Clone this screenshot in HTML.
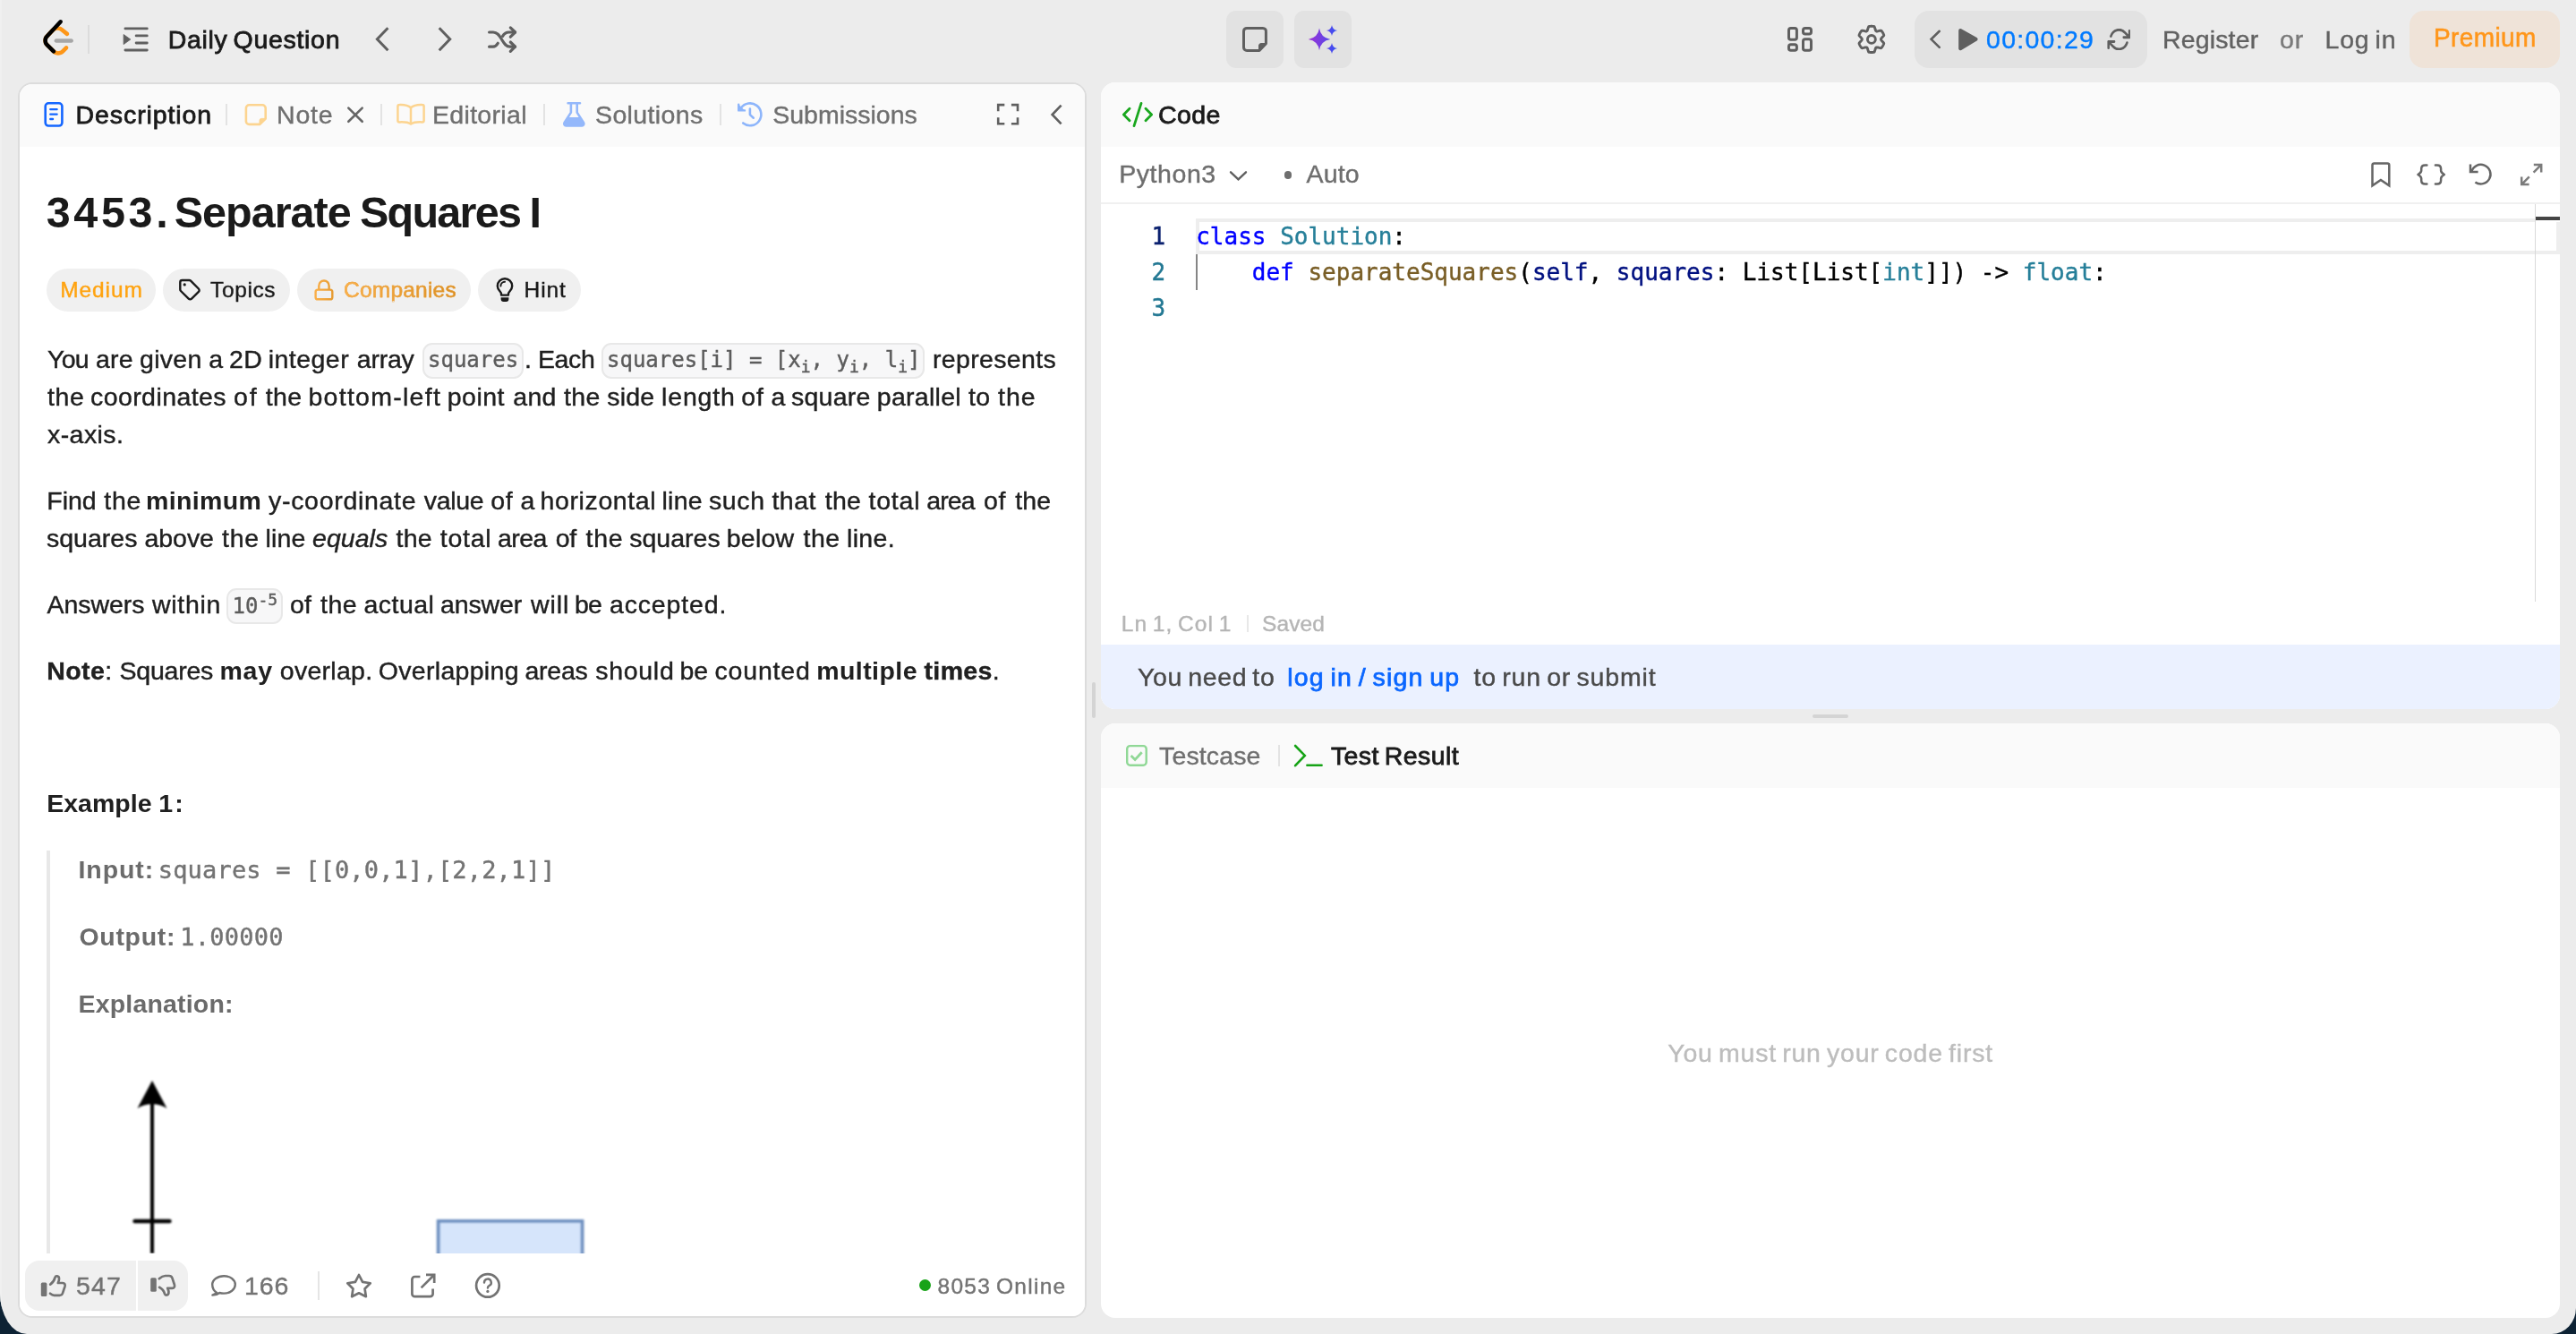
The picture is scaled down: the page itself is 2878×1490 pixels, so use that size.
<!DOCTYPE html>
<html lang="en"><head><meta charset="utf-8"><title>Separate Squares I - LeetCode</title>
<style>

html,body{margin:0;padding:0;}
body{width:2878px;height:1490px;overflow:hidden;background:#0d2234;}
#root{position:absolute;left:0;top:0;width:2878px;height:1490px;overflow:hidden;background:#ececec;border-radius:0 0 27px 30px / 0 0 29px 46px;font-family:"Liberation Sans",sans-serif;}
#root div,#root svg{position:absolute;}
#lstrip{left:0;top:0;width:2px;height:1490px;background:#f0f0f0;}
#txt{left:0;top:0;width:2878px;height:1490px;will-change:transform;}
.t{position:absolute;white-space:pre;line-height:1;word-spacing:-0.09em;}
.m{word-spacing:0;font-family:"DejaVu Sans Mono","Liberation Mono",monospace;}
.t sub,.t sup{font-size:18px;line-height:0;position:relative;vertical-align:baseline;}
.t sub{top:6px;}
.t sup{top:-9px;}
.panel{background:#fff;border-radius:16px;overflow:hidden;}
.tabbar{left:0;top:0;right:0;height:72px;background:#fafafa;}
.sep{width:2px;background:#e3e3e3;}
.pill{height:48px;border-radius:24px;background:#f0f0f0;top:300px;}
.code{background:#f7f7f8;border:2px solid #e8e8e8;border-radius:11px;box-sizing:border-box;}

</style></head><body>
<div id="root">
<div id="lstrip"></div>
<svg style="left:47.5px;top:22px" width="34.25" height="39.75" viewBox="0 0 95 111" ><path d="M68.0063 83.0664C70.5 80.5764 74.5366 80.5829 77.0223 83.0809C79.508 85.579 79.5015 89.6226 77.0078 92.1127L65.9346 103.17C55.7187 113.371 39.06 113.519 28.6718 103.513C28.6117 103.456 23.9861 98.9201 8.72653 83.957C-1.42528 74.0029 -2.43665 58.0749 7.11648 47.8464L24.9282 28.7745C34.4095 18.6219 51.887 17.5122 62.7275 26.2789L78.9048 39.362C81.6444 41.5776 82.0723 45.5985 79.8606 48.3429C77.6488 51.0873 73.635 51.5159 70.8954 49.3003L54.7182 36.2173C49.0488 31.6325 39.1314 32.2622 34.2394 37.5006L16.4274 56.5727C11.7767 61.5522 12.2861 69.574 17.6456 74.8292C28.851 85.8169 37.4869 94.2846 37.4969 94.2942C42.8977 99.496 51.6304 99.4184 56.9331 94.1234L68.0063 83.0664Z" fill="#FD9618"/><path d="M41.1067 72.0014C37.5858 72.0014 34.7314 69.1421 34.7314 65.615C34.7314 62.0879 37.5858 59.2286 41.1067 59.2286H88.1245C91.6454 59.2286 94.4997 62.0879 94.4997 65.615C94.4997 69.1421 91.6454 72.0014 88.1245 72.0014H41.1067Z" fill="#A6A6A6"/><path d="M49.9118 2.02335C52.3173 -0.55232 56.3517 -0.686894 58.9228 1.72277C61.494 4.13244 61.6284 8.17385 59.2229 10.7495L16.4276 56.5729C11.7768 61.552 12.2861 69.5738 17.6453 74.8292L37.4088 94.2091C39.9249 96.6764 39.968 100.72 37.505 103.24C35.042 105.761 31.0056 105.804 28.4895 103.337L8.72593 83.9567C-1.42529 74.0021 -2.43665 58.0741 7.1169 47.8463L49.9118 2.02335Z" fill="black"/></svg>
<div class="sep" style="left:98px;top:28px;height:32px;background:#dcdcdc"></div>
<svg style="left:130px;top:20px" width="50" height="50" viewBox="130 20 50 50" ><path d="M139.9,31.9H164.3M152.1,39.9H164.3M152.1,48H164.3M139.9,56H164.3" fill="none" stroke="#5f5f5f" stroke-width="2.8" stroke-linecap="round" stroke-linejoin="round" /><path d="M138.1,38.5 L145.8,44 L138.1,49.6Z" fill="#5f5f5f" stroke="#5f5f5f" stroke-width="0.8" stroke-linejoin="round"/></svg>
<svg style="left:410px;top:20px" width="40" height="50" viewBox="410 20 40 50" ><path d="M433.4,31.3 L421.4,43.7 L433.4,56.2" fill="none" stroke="#5f5f5f" stroke-width="3" stroke-linecap="butt" stroke-linejoin="miter" /></svg>
<svg style="left:480px;top:20px" width="40" height="50" viewBox="480 20 40 50" ><path d="M490.7,31.3 L502.7,43.7 L490.7,56.2" fill="none" stroke="#5f5f5f" stroke-width="3" stroke-linecap="butt" stroke-linejoin="miter" /></svg>
<svg style="left:540px;top:24px" width="44" height="40" viewBox="540 24 44 40" ><path d="M546.6,36 H551 C556,36 558,40 560.5,44 C563,48 565,52.2 570,52.2 H575.5" fill="none" stroke="#5f5f5f" stroke-width="3.2" stroke-linecap="round" stroke-linejoin="round" /><path d="M546.6,52.2 H551 C553.5,52.2 555,50.5 556.3,48.3" fill="none" stroke="#5f5f5f" stroke-width="3.2" stroke-linecap="round" stroke-linejoin="round" /><path d="M561.6,40.3 C563,38 565,36 568.5,36 H575.5" fill="none" stroke="#5f5f5f" stroke-width="3.2" stroke-linecap="round" stroke-linejoin="round" /><path d="M570.3,30.9 L575.6,36 L570.3,41.2 M570.3,47 L575.6,52.2 L570.3,57.4" fill="none" stroke="#5f5f5f" stroke-width="3.2" stroke-linecap="round" stroke-linejoin="round" /></svg>
<div style="left:1370px;top:12px;width:64px;height:64px;border-radius:11px;background:#e2e2e2"></div>
<div style="left:1446px;top:12px;width:64px;height:64px;border-radius:11px;background:#e2e2e2"></div>
<svg style="left:1384px;top:26px" width="36" height="36" viewBox="1384 26 36 36" ><path d="M1393,31.4 H1410.9 A3.5,3.5 0 0 1 1414.4,35.4 V48.6 L1407,56.4 H1393 A3.5,3.5 0 0 1 1389.5,52.9 V34.9 A3.5,3.5 0 0 1 1393,31.4Z" fill="none" stroke="#5f5f5f" stroke-width="3" stroke-linecap="round" stroke-linejoin="round" /><path d="M1406.6,56.6 V51.2 A2.6,2.6 0 0 1 1409.2,48.6 H1414.6 Z" fill="#5f5f5f" stroke="#5f5f5f" stroke-width="1.2" stroke-linejoin="round"/></svg>
<svg style="left:1456px;top:24px" width="44" height="40" viewBox="1456 24 44 40" ><defs><linearGradient id="aig" x1="1462" y1="0" x2="1494" y2="0" gradientUnits="userSpaceOnUse"><stop offset="0" stop-color="#9b30d6"/><stop offset="0.55" stop-color="#6a43e4"/><stop offset="1" stop-color="#2f50f5"/></linearGradient></defs><path d="M1474,31.599999999999998 Q1475.60,42.30 1486.3,43.9 Q1475.60,45.50 1474,56.2 Q1472.40,45.50 1461.7,43.9 Q1472.40,42.30 1474,31.599999999999998Z" fill="url(#aig)"/><path d="M1488,27.9 Q1488.79,33.21 1494.1,34 Q1488.79,34.79 1488,40.1 Q1487.21,34.79 1481.9,34 Q1487.21,33.21 1488,27.9Z" fill="url(#aig)"/><path d="M1488,47.9 Q1488.79,53.21 1494.1,54 Q1488.79,54.79 1488,60.1 Q1487.21,54.79 1481.9,54 Q1487.21,53.21 1488,47.9Z" fill="url(#aig)"/></svg>
<svg style="left:1990px;top:24px" width="42" height="40" viewBox="1990 24 42 40" ><rect x="1998.5" y="31.5" width="8.9" height="12.7" rx="2.3" fill="none" stroke="#5f5f5f" stroke-width="3"/><rect x="2014.5" y="31.5" width="9" height="6.6" rx="2.3" fill="none" stroke="#5f5f5f" stroke-width="3"/><rect x="1998.5" y="49.7" width="8.9" height="6.6" rx="2.3" fill="none" stroke="#5f5f5f" stroke-width="3"/><rect x="2014.5" y="43.7" width="9" height="12.6" rx="2.3" fill="none" stroke="#5f5f5f" stroke-width="3"/></svg>
<svg style="left:2070px;top:24px" width="42" height="40" viewBox="2070 24 42 40" ><path d="M2090.90,29.30 L2091.54,29.31 L2092.17,29.36 L2092.81,29.42 L2093.44,29.52 L2094.04,29.72 L2094.45,30.67 L2094.77,31.62 L2095.04,32.53 L2095.28,33.33 L2095.52,34.00 L2095.80,34.49 L2096.20,34.72 L2096.60,34.95 L2097.17,34.95 L2097.86,34.83 L2098.68,34.63 L2099.60,34.41 L2100.59,34.21 L2101.61,34.08 L2102.08,34.52 L2102.48,35.01 L2102.86,35.53 L2103.21,36.06 L2103.54,36.60 L2103.85,37.16 L2104.13,37.73 L2104.39,38.31 L2104.62,38.91 L2104.76,39.53 L2104.13,40.35 L2103.47,41.11 L2102.82,41.80 L2102.24,42.41 L2101.79,42.95 L2101.50,43.44 L2101.50,43.90 L2101.50,44.36 L2101.79,44.85 L2102.24,45.39 L2102.82,46.00 L2103.47,46.69 L2104.13,47.45 L2104.76,48.27 L2104.62,48.89 L2104.39,49.49 L2104.13,50.07 L2103.85,50.64 L2103.54,51.20 L2103.21,51.74 L2102.86,52.27 L2102.48,52.79 L2102.08,53.28 L2101.61,53.72 L2100.59,53.59 L2099.60,53.39 L2098.68,53.17 L2097.86,52.97 L2097.17,52.85 L2096.60,52.85 L2096.20,53.08 L2095.80,53.31 L2095.52,53.80 L2095.28,54.47 L2095.04,55.27 L2094.77,56.18 L2094.45,57.13 L2094.04,58.08 L2093.44,58.28 L2092.81,58.38 L2092.17,58.44 L2091.54,58.49 L2090.90,58.50 L2090.26,58.49 L2089.63,58.44 L2088.99,58.38 L2088.36,58.28 L2087.76,58.08 L2087.35,57.13 L2087.03,56.18 L2086.76,55.27 L2086.52,54.47 L2086.28,53.80 L2086.00,53.31 L2085.60,53.08 L2085.20,52.85 L2084.63,52.85 L2083.94,52.97 L2083.12,53.17 L2082.20,53.39 L2081.21,53.59 L2080.19,53.72 L2079.72,53.28 L2079.32,52.79 L2078.94,52.27 L2078.59,51.74 L2078.26,51.20 L2077.95,50.64 L2077.67,50.07 L2077.41,49.49 L2077.18,48.89 L2077.04,48.27 L2077.67,47.45 L2078.33,46.69 L2078.98,46.00 L2079.56,45.39 L2080.01,44.85 L2080.30,44.36 L2080.30,43.90 L2080.30,43.44 L2080.01,42.95 L2079.56,42.41 L2078.98,41.80 L2078.33,41.11 L2077.67,40.35 L2077.04,39.53 L2077.18,38.91 L2077.41,38.31 L2077.67,37.73 L2077.95,37.16 L2078.26,36.60 L2078.59,36.06 L2078.94,35.53 L2079.32,35.01 L2079.72,34.52 L2080.19,34.08 L2081.21,34.21 L2082.20,34.41 L2083.12,34.63 L2083.94,34.83 L2084.63,34.95 L2085.20,34.95 L2085.60,34.72 L2086.00,34.49 L2086.28,34.00 L2086.52,33.33 L2086.76,32.53 L2087.03,31.62 L2087.35,30.67 L2087.76,29.72 L2088.36,29.52 L2088.99,29.42 L2089.63,29.36 L2090.26,29.31 L2090.90,29.30Z" fill="none" stroke="#5f5f5f" stroke-width="2.9" stroke-linejoin="round"/><circle cx="2090.9" cy="43.9" r="4.45" fill="none" stroke="#5f5f5f" stroke-width="2.9"/></svg>
<div style="left:2139px;top:12px;width:260px;height:64px;border-radius:16px;background:#e2e2e2"></div>
<svg style="left:2150px;top:24px" width="70" height="40" viewBox="2150 24 70 40" ><path d="M2166.8,34.8 L2157.6,43.8 L2166.8,52.9" fill="none" stroke="#5f5f5f" stroke-width="2.6" stroke-linecap="round" stroke-linejoin="miter" /><path d="M2190.2,33.9 L2207.6,43.8 L2190.2,54.2Z" fill="#5f5f5f" stroke="#5f5f5f" stroke-width="4" stroke-linejoin="round"/></svg>
<svg style="left:2353.5px;top:31.7px" width="26.8" height="24.2" viewBox="-0.6 1.9 25.2 20.2" preserveAspectRatio="none"><path d="M23,4 V10 H17 M1,20 V14 H7 M3.51,9 A9,9 0 0 1 18.36,5.64 L23,10 M1,14 L5.64,18.36 A9,9 0 0 0 20.49,15" fill="none" stroke="#5f5f5f" stroke-width="2.4" stroke-linecap="round" stroke-linejoin="round" /></svg>
<div style="left:2692px;top:12px;width:168px;height:64px;border-radius:16px;background:#efe3d8"></div>
<div class="panel" style="left:20px;top:92px;width:1194px;height:1380px;box-sizing:border-box;border:2px solid #dcdcdc"><div class="tabbar" style="height:70px"></div></div>
<div class="panel" style="left:1230px;top:92px;width:1630px;height:700px"><div class="tabbar"></div><div style="left:0;top:134px;width:1630px;height:2px;background:#f0f0f0"></div><div style="left:0;top:628px;width:1630px;height:72px;background:#ebf1ff"></div></div>
<div class="panel" style="left:1230px;top:808px;width:1630px;height:664px"><div class="tabbar"></div></div>
<div style="left:1220px;top:762px;width:4px;height:40px;border-radius:2px;background:#d4d4d4"></div>
<div style="left:2025px;top:798px;width:40px;height:4px;border-radius:2px;background:#d4d4d4"></div>
<svg style="left:44px;top:108px" width="32" height="40" viewBox="44 108 32 40" ><rect x="50.7" y="115.3" width="18.7" height="25.2" rx="3.5" fill="none" stroke="#1466ff" stroke-width="2.6"/><path d="M56.3,122.1H63.6M56.3,127.6H63.6M56.3,133H59" fill="none" stroke="#1466ff" stroke-width="2.4" stroke-linecap="round" stroke-linejoin="round" /></svg>
<div class="sep" style="left:252px;top:116px;height:24px"></div>
<div class="sep" style="left:425px;top:116px;height:24px"></div>
<div class="sep" style="left:607px;top:116px;height:24px"></div>
<div class="sep" style="left:804px;top:116px;height:24px"></div>
<svg style="left:268px;top:110px" width="36" height="36" viewBox="268 110 36 36" ><path d="M278.4,117.3 H293.2 A3.5,3.5 0 0 1 296.7,120.8 V132.5 L290.3,138.9 H278.4 A3.5,3.5 0 0 1 274.9,135.4 V120.8 A3.5,3.5 0 0 1 278.4,117.3Z" fill="none" stroke="#fcd490" stroke-width="2.6" stroke-linecap="round" stroke-linejoin="round" /><path d="M290,139 V134.6 A2.2,2.2 0 0 1 292.2,132.4 H296.8Z" fill="#fcd490" stroke="#fcd490" stroke-width="1" stroke-linejoin="round"/></svg>
<svg style="left:384px;top:114px" width="26" height="28" viewBox="384 114 26 28" ><path d="M389.3,120.6 L404.7,135.8 M404.7,120.6 L389.3,135.8" fill="none" stroke="#666" stroke-width="2.6" stroke-linecap="round" stroke-linejoin="round" /></svg>
<svg style="left:438px;top:110px" width="42" height="36" viewBox="438 110 42 36" ><path d="M459,120.2 C456,117.6 451,116.8 446.4,117 A2,2 0 0 0 444.4,119 V134.4 A2,2 0 0 0 446.4,136.4 C451,136.2 456,136.4 459,138.6 C462,136.4 467,136.2 471.6,136.4 A2,2 0 0 0 473.6,134.4 V119 A2,2 0 0 0 471.6,117 C467,116.8 462,117.6 459,120.2 V138.2" fill="none" stroke="#fcd490" stroke-width="2.5" stroke-linecap="round" stroke-linejoin="round" /></svg>
<svg style="left:624px;top:110px" width="34" height="36" viewBox="624 110 34 36" ><path d="M634.6,115.3 H648 M637.9,115.5 V125.6 L630.6,137 A2.2,2.2 0 0 0 632.5,140.4 H650.1 A2.2,2.2 0 0 0 652,137 L644.7,125.6 V115.5" fill="none" stroke="#94b8fb" stroke-width="2.6" stroke-linecap="round" stroke-linejoin="round"/><path d="M634.6,131 H648 L652,137.2 A2.2,2.2 0 0 1 650.1,140.6 H632.5 A2.2,2.2 0 0 1 630.6,137.2Z" fill="#94b8fb"/></svg>
<svg style="left:818px;top:108px" width="40" height="40" viewBox="818 108 40 40" ><path d="M827.9,120.6 A12.4,12.4 0 1 1 830.2,137.5" fill="none" stroke="#8db5fb" stroke-width="2.6" stroke-linecap="round" stroke-linejoin="round" /><path d="M825.2,116.6 V123.4 H832" fill="#8db5fb" stroke="#8db5fb" stroke-width="2.4" stroke-linecap="round" stroke-linejoin="round"/><path d="M837.9,121.6 V128.1 L841.8,131.7" fill="none" stroke="#8db5fb" stroke-width="2.6" stroke-linecap="round" stroke-linejoin="round" /></svg>
<svg style="left:1108px;top:110px" width="36" height="36" viewBox="1108 110 36 36" ><path d="M1115.2,124.2 V117.1 H1122.3 M1129.9,117.1 H1137 V124.2 M1137,131.2 V138.3 H1129.9 M1122.3,138.3 H1115.2 V131.2" fill="none" stroke="#5f5f5f" stroke-width="2.6" stroke-linecap="butt" stroke-linejoin="miter" /></svg>
<svg style="left:1166px;top:110px" width="28" height="36" viewBox="1166 110 28 36" ><path d="M1185.6,117.6 L1175.6,128 L1185.6,138.4" fill="none" stroke="#5f5f5f" stroke-width="2.6" stroke-linecap="butt" stroke-linejoin="miter" /></svg>
<div class="pill" style="left:52px;width:122px"></div>
<div class="pill" style="left:182px;width:142px"></div>
<div class="pill" style="left:332px;width:194px"></div>
<div class="pill" style="left:534px;width:115px"></div>
<svg style="left:196px;top:306px" width="32" height="34" viewBox="196 306 32 34" ><path d="M201.3,315.2 A2.2,2.2 0 0 1 203.5,313 H211.4 A2.4,2.4 0 0 1 213.1,313.7 L221.9,322.5 A2.4,2.4 0 0 1 221.9,325.9 L214.1,333.7 A2.4,2.4 0 0 1 210.7,333.7 L202,325 A2.4,2.4 0 0 1 201.3,323.3Z" fill="none" stroke="#1a1a1a" stroke-width="2.4" stroke-linecap="round" stroke-linejoin="round" /><circle cx="206.2" cy="317.9" r="1.6" fill="#1a1a1a"/></svg>
<svg style="left:346px;top:306px" width="32" height="34" viewBox="346 306 32 34" ><defs><linearGradient id="lkg" x1="351" y1="0" x2="373" y2="0" gradientUnits="userSpaceOnUse"><stop offset="0" stop-color="#fbb04a"/><stop offset="1" stop-color="#e59a30"/></linearGradient></defs><rect x="352.6" y="323.6" width="18.7" height="10.7" rx="2.4" fill="none" stroke="url(#lkg)" stroke-width="2.4"/><path d="M356.3,323.4 V319.2 A5.65,5.65 0 0 1 367.6,319.2 V323.4" fill="none" stroke="url(#lkg)" stroke-width="2.4"/></svg>
<svg style="left:548px;top:304px" width="32" height="40" viewBox="548 304 32 40" ><path d="M560,329.6 V328 C560,325.6 555.8,324.2 555.8,319.5 A8.2,8.2 0 0 1 572.2,319.5 C572.2,324.2 568,325.6 568,328 V329.6 Z" fill="none" stroke="#1a1a1a" stroke-width="2.4" stroke-linecap="round" stroke-linejoin="round" /><path d="M559.4,319.4 A4.6,4.6 0 0 1 564,314.8" fill="none" stroke="#1a1a1a" stroke-width="2" stroke-linecap="round" stroke-linejoin="round" /><path d="M559.6,332.3 H568.4 V334 A3,3 0 0 1 565.4,337 H562.6 A3,3 0 0 1 559.6,334Z" fill="#1a1a1a"/></svg>
<div class="code" style="left:472px;top:383px;width:113px;height:40px"></div>
<div class="code" style="left:672.3px;top:383px;width:361px;height:40px"></div>
<div class="code" style="left:253.3px;top:657px;width:62.7px;height:40px"></div>
<div style="left:52px;top:950px;width:4px;height:450px;background:#e8e8e8"></div>
<svg style="left:140px;top:1200px" width="560" height="200" viewBox="140 1200 560 200" ><g style="filter:blur(0.9px)"><path d="M170,1400 V1232" stroke="#000" stroke-width="4" fill="none"/><path d="M170,1207 L186.5,1238 C178,1231.5 162,1231.5 153.5,1238Z" fill="#000"/><path d="M150.5,1364 H189.5" stroke="#000" stroke-width="4.4" stroke-linecap="round" fill="none"/><rect x="489.6" y="1363.8" width="161" height="60" fill="#d6e5fb" stroke="#6c8ebf" stroke-width="3.6"/></g></svg>
<div style="left:22px;top:1400px;width:1190px;height:70px;background:#fff;border-radius:0 0 14px 14px"></div>
<div style="left:28px;top:1408px;width:124px;height:56px;background:#f0f0f0;border-radius:16px 0 0 16px"></div>
<div style="left:154px;top:1408px;width:56px;height:56px;background:#f0f0f0;border-radius:0 16px 16px 0"></div>
<svg style="left:40px;top:1418px" width="40" height="36" viewBox="40 1418 40 36" ><rect x="45.8" y="1432.6" width="6.6" height="15.4" rx="1.6" fill="#737373"/><path d="M56.2,1434.6 C59,1432.6 61,1429 61.6,1426.6 C62.2,1424.6 65.6,1424.8 66,1427.6 C66.3,1429.6 65.4,1431.8 64.8,1433 H70 C72.4,1433 73,1435 72.5,1436.8 L70,1444.4 C69.4,1446 68.2,1446.8 66.6,1446.8 H60.5 C58.6,1446.8 57.2,1445.8 56,1444.8" fill="none" stroke="#737373" stroke-width="2.7" stroke-linecap="round" stroke-linejoin="round" /></svg>
<svg style="left:162px;top:1418px" width="40" height="36" viewBox="162 1418 40 36" ><rect x="168.2" y="1427.2" width="6.6" height="15.6" rx="1.6" fill="#737373"/><path d="M178,1437.8 C181.2,1439.6 183.4,1442.8 184,1445.2 C184.6,1447.2 188,1447 188.4,1444.2 C188.7,1442.2 187.8,1440 187.2,1438.8 H192.4 C194.8,1438.8 195.4,1436.8 194.9,1435 L192.4,1427.4 C191.8,1425.8 190.6,1425 189,1425 H184.6 C181.6,1425 179.6,1426.6 177.8,1428.2" fill="none" stroke="#737373" stroke-width="2.7" stroke-linecap="round" stroke-linejoin="round" /></svg>
<svg style="left:230px;top:1418px" width="40" height="36" viewBox="230 1418 40 36" ><path d="M242.6,1444.2 C239.2,1442.2 237.2,1438.6 237.2,1434.8 C237.2,1429.4 243,1425.2 250.1,1425.2 C257.2,1425.2 262.8,1429.4 262.8,1434.8 C262.8,1440.2 257.2,1444.6 250.1,1444.6 C248.4,1444.6 246.8,1444.4 245.4,1444 C243.6,1445.4 240.6,1446.6 237.4,1446.6 C239.4,1445.4 241.6,1444.6 242.6,1444.2Z" fill="none" stroke="#737373" stroke-width="2.4" stroke-linecap="round" stroke-linejoin="round" /></svg>
<div class="sep" style="left:355px;top:1420px;height:32px;background:#e5e5e5"></div>
<svg style="left:382px;top:1416px" width="40" height="40" viewBox="382 1416 40 40" ><path d="M401.00,1424.00 L405.06,1431.82 L413.74,1433.26 L407.56,1439.53 L408.88,1448.24 L401.00,1444.30 L393.12,1448.24 L394.44,1439.53 L388.26,1433.26 L396.94,1431.82Z" fill="none" stroke="#737373" stroke-width="2.7" stroke-linecap="round" stroke-linejoin="round" /></svg>
<svg style="left:454px;top:1416px" width="40" height="40" viewBox="454 1416 40 40" ><path d="M469.4,1426 H463.4 A3,3 0 0 0 460.4,1429 V1445.2 A3,3 0 0 0 463.4,1448.2 H480.6 A3,3 0 0 0 483.6,1445.2 V1439.4" fill="none" stroke="#737373" stroke-width="2.7" stroke-linecap="butt" stroke-linejoin="round" /><path d="M476,1423.8 H485.2 V1433 M485,1424 L470.6,1438.4" fill="none" stroke="#737373" stroke-width="2.7" stroke-linecap="butt" stroke-linejoin="miter" /></svg>
<svg style="left:528px;top:1418px" width="36" height="36" viewBox="528 1418 36 36" ><circle cx="544.9" cy="1435.9" r="12.8" fill="none" stroke="#737373" stroke-width="2.7"/><path d="M541,1432.6 A3.9,3.9 0 1 1 546.6,1436 C545.4,1436.7 544.9,1437.4 544.9,1438.6" fill="none" stroke="#737373" stroke-width="2.4" stroke-linecap="round" stroke-linejoin="round" /><circle cx="544.9" cy="1442.4" r="1.6" fill="#737373"/></svg>
<div style="left:1027px;top:1429px;width:13px;height:13px;border-radius:50%;background:#18a318"></div>
<svg style="left:1248.7px;top:110px" width="44" height="36" viewBox="1248 110 44 36" ><path d="M1261,121.3 L1254.4,128 L1261,134.7 M1279,121.3 L1285.6,128 L1279,134.7 M1274,115.4 L1266,140.6" fill="none" stroke="#19a71e" stroke-width="2.8" stroke-linecap="round" stroke-linejoin="round" /></svg>
<svg style="left:1370px;top:186px" width="28" height="20" viewBox="1370 186 28 20" ><path d="M1375,192.3 L1383.5,200.4 L1392,192.3" fill="none" stroke="#5f5f5f" stroke-width="2.4" stroke-linecap="round" stroke-linejoin="miter" /></svg>
<div style="left:1434.5px;top:191px;width:8.5px;height:8.5px;border-radius:50%;background:#6e6e6e"></div>
<svg style="left:2644px;top:176px" width="32" height="38" viewBox="2644 176 32 38" ><path d="M2650.5,184.5 A2,2 0 0 1 2652.5,182.5 H2667.3 A2,2 0 0 1 2669.3,184.5 V207.4 L2659.9,200.9 L2650.5,207.4Z" fill="none" stroke="#666" stroke-width="2.5" stroke-linecap="round" stroke-linejoin="miter" /></svg>
<svg style="left:2696px;top:178px" width="40" height="34" viewBox="2696 178 40 34" ><path d="M2711.4,184.4 H2709.4 C2706.4,184.4 2705.2,186 2705.2,188.4 V190.6 C2705.2,192.6 2703.6,193.8 2701.4,195 C2703.6,196.2 2705.2,197.4 2705.2,199.4 V201.6 C2705.2,204 2706.4,205.6 2709.4,205.6 H2711.4" fill="none" stroke="#666" stroke-width="2.5" stroke-linecap="round" stroke-linejoin="round" /><path d="M2720.9,184.4 H2722.9 C2725.9,184.4 2727.1,186 2727.1,188.4 V190.6 C2727.1,192.6 2728.7,193.8 2730.9,195 C2728.7,196.2 2727.1,197.4 2727.1,199.4 V201.6 C2727.1,204 2725.9,205.6 2722.9,205.6 H2720.9" fill="none" stroke="#666" stroke-width="2.5" stroke-linecap="round" stroke-linejoin="round" /></svg>
<svg style="left:2752px;top:176px" width="38" height="38" viewBox="2752 176 38 38" ><path d="M2761.2,192 A10.8,10.8 0 1 1 2765.4,203.4" fill="none" stroke="#666" stroke-width="2.5" stroke-linecap="butt" stroke-linejoin="round" /><path d="M2760,183.6 V192 H2768.6" fill="none" stroke="#666" stroke-width="2.5" stroke-linecap="butt" stroke-linejoin="miter" /></svg>
<svg style="left:2810px;top:176px" width="36" height="38" viewBox="2810 176 36 38" ><path d="M2830.8,184 H2839.2 V192.4 M2839,184.2 L2830.6,192.6 M2825.6,206 H2817.2 V197.6 M2817.4,205.8 L2825.8,197.4" fill="none" stroke="#7c7c7c" stroke-width="2.5" stroke-linecap="butt" stroke-linejoin="miter" /></svg>
<div style="left:1336px;top:244px;width:1524px;height:40px;box-sizing:border-box;border:4px solid #eeeeee"></div>
<div style="left:1336px;top:284px;width:2px;height:40px;background:#858585"></div>
<div style="left:2832px;top:228px;width:1px;height:444px;background:#d9d9d9"></div>
<div style="left:2833px;top:244px;width:27px;height:4px;background:#fff"></div>
<div style="left:2833px;top:242px;width:27px;height:4px;background:#454545"></div>
<div class="sep" style="left:1393px;top:687px;height:19px;background:#e8e8e8"></div>
<svg style="left:1252px;top:826px" width="36" height="36" viewBox="1252 826 36 36" ><rect x="1259.2" y="833.1" width="21.5" height="21.6" rx="3.4" fill="none" stroke="#90d896" stroke-width="2.4"/><path d="M1263.6,844.1 L1268.1,848.4 L1275.7,840.3" fill="none" stroke="#90d896" stroke-width="2.8" stroke-linecap="butt" stroke-linejoin="miter" /></svg>
<div class="sep" style="left:1428px;top:832px;height:24px"></div>
<svg style="left:1440px;top:826px" width="44" height="36" viewBox="1440 826 44 36" ><path d="M1447.1,833 L1457.8,843.9 L1447.1,855.2 M1460.4,854.8 H1476.6" fill="none" stroke="#16a316" stroke-width="2.6" stroke-linecap="round" stroke-linejoin="miter" /></svg>
<div id="txt">
<span class="t" id="daily" style="left:187.75px;top:29.62px;font-size:28.5px;color:#1a1a1a;-webkit-text-stroke:0.8px #1a1a1a;letter-spacing:0.692px;">Daily Question</span>
<span class="t" id="timer" style="left:2219.00px;top:29.62px;font-size:28.5px;color:#007aff;-webkit-text-stroke:0.4px #007aff;letter-spacing:1.286px;">00:00:29</span>
<span class="t" id="reg" style="left:2416.00px;top:29.62px;font-size:28.5px;color:#626262;-webkit-text-stroke:0.4px #626262;letter-spacing:0.143px;">Register</span>
<span class="t" id="or" style="left:2547.00px;top:29.62px;font-size:28.5px;color:#7a7a7a;-webkit-text-stroke:0.4px #7a7a7a;letter-spacing:1.000px;">or</span>
<span class="t" id="login" style="left:2597.50px;top:29.62px;font-size:28.5px;color:#626262;-webkit-text-stroke:0.4px #626262;letter-spacing:0.800px;">Log in</span>
<span class="t" id="prem" style="left:2718.60px;top:27.42px;font-size:29.5px;color:#ff961a;-webkit-text-stroke:0.55px #ff961a;letter-spacing:0.400px;transform:scaleX(0.95);transform-origin:0 50%;">Premium</span>
<span class="t" id="tdesc" style="left:84.60px;top:113.87px;font-size:28.5px;color:#1a1a1a;-webkit-text-stroke:0.8px #1a1a1a;letter-spacing:0.900px;">Description</span>
<span class="t" id="tnote" style="left:309.00px;top:113.87px;font-size:28.5px;color:#6f6f6f;-webkit-text-stroke:0.4px #6f6f6f;letter-spacing:0.833px;">Note</span>
<span class="t" id="tedit" style="left:483.00px;top:113.87px;font-size:28.5px;color:#6f6f6f;-webkit-text-stroke:0.4px #6f6f6f;letter-spacing:0.312px;">Editorial</span>
<span class="t" id="tsol" style="left:665.00px;top:113.87px;font-size:28.5px;color:#6f6f6f;-webkit-text-stroke:0.4px #6f6f6f;letter-spacing:0.375px;">Solutions</span>
<span class="t" id="tsub" style="left:863.25px;top:113.87px;font-size:28.5px;color:#6f6f6f;-webkit-text-stroke:0.4px #6f6f6f;">Submissions</span>
<span class="t" id="title1" style="left:51.75px;top:212.69px;font-size:48.5px;color:#1a1a1a;font-weight:700;letter-spacing:3.625px;">3453.</span>
<span class="t" id="title2" style="left:194.75px;top:212.69px;font-size:48.5px;color:#1a1a1a;font-weight:700;letter-spacing:-1.000px;">Separate</span>
<span class="t" id="title3" style="left:402.00px;top:212.69px;font-size:48.5px;color:#1a1a1a;font-weight:700;letter-spacing:-1.750px;">Squares</span>
<span class="t" id="title4" style="left:591.50px;top:212.69px;font-size:48.5px;color:#1a1a1a;font-weight:700;">I</span>
<span class="t" id="pmed" style="left:67.25px;top:312.26px;font-size:24.5px;color:#ffa310;-webkit-text-stroke:0.4px #ffa310;letter-spacing:0.900px;">Medium</span>
<span class="t" id="ptop" style="left:235.10px;top:311.86px;font-size:24.5px;color:#1a1a1a;-webkit-text-stroke:0.4px #1a1a1a;letter-spacing:0.600px;">Topics</span>
<span class="t" id="pcomp" style="left:384.00px;top:311.86px;font-size:24.5px;color:#e9a03c;-webkit-text-stroke:0.4px #e9a03c;letter-spacing:0.225px;background:linear-gradient(90deg,#fbb04a,#d98e22);-webkit-background-clip:text;background-clip:text;color:transparent;">Companies</span>
<span class="t" id="phint" style="left:585.50px;top:311.86px;font-size:24.5px;color:#1a1a1a;-webkit-text-stroke:0.4px #1a1a1a;letter-spacing:0.933px;">Hint</span>
<span class="t" id="l1w0" style="left:53.00px;top:386.87px;font-size:28.5px;color:#202020;-webkit-text-stroke:0.4px #202020;letter-spacing:-0.740px;">You</span>
<span class="t" id="l1w1" style="left:107.00px;top:386.87px;font-size:28.5px;color:#202020;-webkit-text-stroke:0.4px #202020;letter-spacing:0.260px;">are</span>
<span class="t" id="l1w2" style="left:156.00px;top:386.87px;font-size:28.5px;color:#202020;-webkit-text-stroke:0.4px #202020;letter-spacing:0.285px;">given</span>
<span class="t" id="l1w3" style="left:233.25px;top:386.87px;font-size:28.5px;color:#202020;-webkit-text-stroke:0.4px #202020;letter-spacing:0.560px;">a</span>
<span class="t" id="l1w4" style="left:256.00px;top:386.87px;font-size:28.5px;color:#202020;-webkit-text-stroke:0.4px #202020;letter-spacing:0.460px;">2D</span>
<span class="t" id="l1w5" style="left:299.75px;top:386.87px;font-size:28.5px;color:#202020;-webkit-text-stroke:0.4px #202020;letter-spacing:0.460px;">integer</span>
<span class="t" id="l1w6" style="left:398.75px;top:386.87px;font-size:28.5px;color:#202020;-webkit-text-stroke:0.4px #202020;letter-spacing:-0.215px;">array</span>
<span class="t m" id="c1" style="left:478.00px;top:390.20px;font-size:24px;color:#5c5c5c;-webkit-text-stroke:0.4px;">squares</span>
<span class="t" id="p1b" style="left:586.00px;top:386.87px;font-size:28.5px;color:#202020;-webkit-text-stroke:0.4px #202020;">.</span>
<span class="t" id="p1b2" style="left:601.00px;top:386.87px;font-size:28.5px;color:#202020;-webkit-text-stroke:0.4px #202020;letter-spacing:-0.400px;">Each</span>
<span class="t m" id="c2" style="left:678.00px;top:390.20px;font-size:24px;color:#5c5c5c;-webkit-text-stroke:0.4px;">squares[i] = [x<sub>i</sub>, y<sub>i</sub>, l<sub>i</sub>]</span>
<span class="t" id="p1c" style="left:1042.00px;top:386.87px;font-size:28.5px;color:#202020;-webkit-text-stroke:0.4px #202020;letter-spacing:0.333px;">represents</span>
<span class="t" id="l2w0" style="left:53.00px;top:428.87px;font-size:28.5px;color:#202020;-webkit-text-stroke:0.4px #202020;letter-spacing:0.580px;">the</span>
<span class="t" id="l2w1" style="left:101.00px;top:428.87px;font-size:28.5px;color:#202020;-webkit-text-stroke:0.4px #202020;letter-spacing:0.420px;">coordinates</span>
<span class="t" id="l2w2" style="left:261.00px;top:428.87px;font-size:28.5px;color:#202020;-webkit-text-stroke:0.4px #202020;letter-spacing:1.780px;">of</span>
<span class="t" id="l2w3" style="left:296.75px;top:428.87px;font-size:28.5px;color:#202020;-webkit-text-stroke:0.4px #202020;letter-spacing:0.330px;">the</span>
<span class="t" id="l2w4" style="left:344.50px;top:428.87px;font-size:28.5px;color:#202020;-webkit-text-stroke:0.4px #202020;letter-spacing:1.270px;">bottom-left</span>
<span class="t" id="l2w5" style="left:499.75px;top:428.87px;font-size:28.5px;color:#202020;-webkit-text-stroke:0.4px #202020;letter-spacing:0.480px;">point</span>
<span class="t" id="l2w6" style="left:573.25px;top:428.87px;font-size:28.5px;color:#202020;-webkit-text-stroke:0.4px #202020;letter-spacing:0.330px;">and</span>
<span class="t" id="l2w7" style="left:630.00px;top:428.87px;font-size:28.5px;color:#202020;-webkit-text-stroke:0.4px #202020;letter-spacing:0.330px;">the</span>
<span class="t" id="l2w8" style="left:678.25px;top:428.87px;font-size:28.5px;color:#202020;-webkit-text-stroke:0.4px #202020;letter-spacing:0.180px;">side</span>
<span class="t" id="l2w9" style="left:739.00px;top:428.87px;font-size:28.5px;color:#202020;-webkit-text-stroke:0.4px #202020;letter-spacing:0.860px;">length</span>
<span class="t" id="l2w10" style="left:828.25px;top:428.87px;font-size:28.5px;color:#202020;-webkit-text-stroke:0.4px #202020;letter-spacing:0.780px;">of</span>
<span class="t" id="l2w11" style="left:861.50px;top:428.87px;font-size:28.5px;color:#202020;-webkit-text-stroke:0.4px #202020;letter-spacing:0.880px;">a</span>
<span class="t" id="l2w12" style="left:884.00px;top:428.87px;font-size:28.5px;color:#202020;-webkit-text-stroke:0.4px #202020;letter-spacing:0.260px;">square</span>
<span class="t" id="l2w13" style="left:979.75px;top:428.87px;font-size:28.5px;color:#202020;-webkit-text-stroke:0.4px #202020;letter-spacing:0.294px;">parallel</span>
<span class="t" id="l2w14" style="left:1082.00px;top:428.87px;font-size:28.5px;color:#202020;-webkit-text-stroke:0.4px #202020;letter-spacing:0.280px;">to</span>
<span class="t" id="l2w15" style="left:1115.00px;top:428.87px;font-size:28.5px;color:#202020;-webkit-text-stroke:0.4px #202020;letter-spacing:0.980px;">the</span>
<span class="t" id="p3" style="left:53.00px;top:470.87px;font-size:28.5px;color:#202020;-webkit-text-stroke:0.4px #202020;letter-spacing:0.433px;">x-axis.</span>
<span class="t" id="l4a0" style="left:52.25px;top:545.37px;font-size:28.5px;color:#202020;-webkit-text-stroke:0.4px #202020;letter-spacing:-0.017px;">Find</span>
<span class="t" id="l4a1" style="left:116.25px;top:545.37px;font-size:28.5px;color:#202020;-webkit-text-stroke:0.4px #202020;letter-spacing:0.800px;">the</span>
<span class="t" id="q1b" style="left:163.00px;top:545.37px;font-size:28.5px;color:#202020;font-weight:700;letter-spacing:0.367px;">minimum</span>
<span class="t" id="l4w0" style="left:300.00px;top:545.37px;font-size:28.5px;color:#202020;-webkit-text-stroke:0.4px #202020;letter-spacing:0.700px;">y-coordinate</span>
<span class="t" id="l4w1" style="left:473.75px;top:545.37px;font-size:28.5px;color:#202020;-webkit-text-stroke:0.4px #202020;letter-spacing:-0.350px;">value</span>
<span class="t" id="l4w2" style="left:548.25px;top:545.37px;font-size:28.5px;color:#202020;-webkit-text-stroke:0.4px #202020;letter-spacing:0.700px;">of</span>
<span class="t" id="l4w3" style="left:581.50px;top:545.37px;font-size:28.5px;color:#202020;-webkit-text-stroke:0.4px #202020;letter-spacing:0.800px;">a</span>
<span class="t" id="l4w4" style="left:603.50px;top:545.37px;font-size:28.5px;color:#202020;-webkit-text-stroke:0.4px #202020;letter-spacing:0.622px;">horizontal</span>
<span class="t" id="l4w5" style="left:739.50px;top:545.37px;font-size:28.5px;color:#202020;-webkit-text-stroke:0.4px #202020;letter-spacing:0.267px;">line</span>
<span class="t" id="l4w6" style="left:792.00px;top:545.37px;font-size:28.5px;color:#202020;-webkit-text-stroke:0.4px #202020;letter-spacing:0.600px;">such</span>
<span class="t" id="l4w7" style="left:862.50px;top:545.37px;font-size:28.5px;color:#202020;-webkit-text-stroke:0.4px #202020;letter-spacing:0.433px;">that</span>
<span class="t" id="l4w8" style="left:921.75px;top:545.37px;font-size:28.5px;color:#202020;-webkit-text-stroke:0.4px #202020;letter-spacing:0.250px;">the</span>
<span class="t" id="l4w9" style="left:970.50px;top:545.37px;font-size:28.5px;color:#202020;-webkit-text-stroke:0.4px #202020;letter-spacing:0.775px;">total</span>
<span class="t" id="l4w10" style="left:1035.25px;top:545.37px;font-size:28.5px;color:#202020;-webkit-text-stroke:0.4px #202020;letter-spacing:-0.900px;">area</span>
<span class="t" id="l4w11" style="left:1099.00px;top:545.37px;font-size:28.5px;color:#202020;-webkit-text-stroke:0.4px #202020;letter-spacing:0.700px;">of</span>
<span class="t" id="l4w12" style="left:1134.25px;top:545.37px;font-size:28.5px;color:#202020;-webkit-text-stroke:0.4px #202020;letter-spacing:0.150px;">the</span>
<span class="t" id="l5a0" style="left:52.00px;top:587.17px;font-size:28.5px;color:#202020;-webkit-text-stroke:0.4px #202020;">squares</span>
<span class="t" id="l5a1" style="left:161.50px;top:587.17px;font-size:28.5px;color:#202020;-webkit-text-stroke:0.4px #202020;letter-spacing:-0.050px;">above</span>
<span class="t" id="l5a2" style="left:248.00px;top:587.17px;font-size:28.5px;color:#202020;-webkit-text-stroke:0.4px #202020;letter-spacing:0.800px;">the</span>
<span class="t" id="l5a3" style="left:296.50px;top:587.17px;font-size:28.5px;color:#202020;-webkit-text-stroke:0.4px #202020;letter-spacing:0.200px;">line</span>
<span class="t" id="q2b" style="left:349.00px;top:587.17px;font-size:28.5px;color:#202020;font-style:italic;-webkit-text-stroke:0.4px #202020;letter-spacing:0.040px;">equals</span>
<span class="t" id="l5w0" style="left:442.50px;top:587.17px;font-size:28.5px;color:#202020;-webkit-text-stroke:0.4px #202020;letter-spacing:0.220px;">the</span>
<span class="t" id="l5w1" style="left:491.75px;top:587.17px;font-size:28.5px;color:#202020;-webkit-text-stroke:0.4px #202020;letter-spacing:0.745px;">total</span>
<span class="t" id="l5w2" style="left:556.00px;top:587.17px;font-size:28.5px;color:#202020;-webkit-text-stroke:0.4px #202020;letter-spacing:-0.597px;">area</span>
<span class="t" id="l5w3" style="left:620.75px;top:587.17px;font-size:28.5px;color:#202020;-webkit-text-stroke:0.4px #202020;letter-spacing:-0.330px;">of</span>
<span class="t" id="l5w4" style="left:654.50px;top:587.17px;font-size:28.5px;color:#202020;-webkit-text-stroke:0.4px #202020;letter-spacing:0.720px;">the</span>
<span class="t" id="l5w5" style="left:703.25px;top:587.17px;font-size:28.5px;color:#202020;-webkit-text-stroke:0.4px #202020;letter-spacing:0.003px;">squares</span>
<span class="t" id="l5w6" style="left:811.75px;top:587.17px;font-size:28.5px;color:#202020;-webkit-text-stroke:0.4px #202020;letter-spacing:0.245px;">below</span>
<span class="t" id="l5w7" style="left:897.50px;top:587.17px;font-size:28.5px;color:#202020;-webkit-text-stroke:0.4px #202020;letter-spacing:0.470px;">the</span>
<span class="t" id="l5w8" style="left:946.00px;top:587.17px;font-size:28.5px;color:#202020;-webkit-text-stroke:0.4px #202020;letter-spacing:0.320px;">line.</span>
<span class="t" id="l6a0" style="left:52.60px;top:661.27px;font-size:28.5px;color:#202020;-webkit-text-stroke:0.4px #202020;letter-spacing:-0.067px;">Answers</span>
<span class="t" id="l6a1" style="left:170.00px;top:661.27px;font-size:28.5px;color:#202020;-webkit-text-stroke:0.4px #202020;letter-spacing:0.700px;">within</span>
<span class="t m" id="c3" style="left:259.50px;top:664.70px;font-size:24px;color:#5c5c5c;-webkit-text-stroke:0.4px;">10<sup>-5</sup></span>
<span class="t" id="l6w0" style="left:324.00px;top:661.27px;font-size:28.5px;color:#202020;-webkit-text-stroke:0.4px #202020;letter-spacing:0.190px;">of</span>
<span class="t" id="l6w1" style="left:358.00px;top:661.27px;font-size:28.5px;color:#202020;-webkit-text-stroke:0.4px #202020;letter-spacing:0.490px;">the</span>
<span class="t" id="l6w2" style="left:406.50px;top:661.27px;font-size:28.5px;color:#202020;-webkit-text-stroke:0.4px #202020;letter-spacing:0.470px;">actual</span>
<span class="t" id="l6w3" style="left:492.00px;top:661.27px;font-size:28.5px;color:#202020;-webkit-text-stroke:0.4px #202020;letter-spacing:-0.130px;">answer</span>
<span class="t" id="l6w4" style="left:593.00px;top:661.27px;font-size:28.5px;color:#202020;-webkit-text-stroke:0.4px #202020;letter-spacing:0.923px;">will</span>
<span class="t" id="l6w5" style="left:642.00px;top:661.27px;font-size:28.5px;color:#202020;-webkit-text-stroke:0.4px #202020;letter-spacing:-0.810px;">be</span>
<span class="t" id="l6w6" style="left:681.00px;top:661.27px;font-size:28.5px;color:#202020;-webkit-text-stroke:0.4px #202020;letter-spacing:0.840px;">accepted.</span>
<span class="t" id="s1a" style="left:52.25px;top:735.37px;font-size:28.5px;color:#202020;-webkit-text-stroke:0.4px #202020;letter-spacing:0.425px;"><b>Note</b>:</span>
<span class="t" id="l7a0" style="left:133.50px;top:735.37px;font-size:28.5px;color:#202020;-webkit-text-stroke:0.4px #202020;letter-spacing:-0.217px;">Squares</span>
<span class="t" id="s1c" style="left:245.50px;top:735.37px;font-size:28.5px;color:#202020;font-weight:700;letter-spacing:0.750px;">may</span>
<span class="t" id="l7w0" style="left:312.75px;top:735.37px;font-size:28.5px;color:#202020;-webkit-text-stroke:0.4px #202020;letter-spacing:0.291px;">overlap.</span>
<span class="t" id="l7w1" style="left:422.75px;top:735.37px;font-size:28.5px;color:#202020;-webkit-text-stroke:0.4px #202020;letter-spacing:0.310px;">Overlapping</span>
<span class="t" id="l7w2" style="left:586.50px;top:735.37px;font-size:28.5px;color:#202020;-webkit-text-stroke:0.4px #202020;letter-spacing:-0.255px;">areas</span>
<span class="t" id="l7w3" style="left:665.25px;top:735.37px;font-size:28.5px;color:#202020;-webkit-text-stroke:0.4px #202020;letter-spacing:0.700px;">should</span>
<span class="t" id="l7w4" style="left:759.50px;top:735.37px;font-size:28.5px;color:#202020;-webkit-text-stroke:0.4px #202020;letter-spacing:-0.080px;">be</span>
<span class="t" id="l7w5" style="left:798.50px;top:735.37px;font-size:28.5px;color:#202020;-webkit-text-stroke:0.4px #202020;letter-spacing:0.820px;">counted</span>
<span class="t" id="s1e" style="left:912.25px;top:735.37px;font-size:28.5px;color:#202020;font-weight:700;letter-spacing:0.429px;">multiple</span>
<span class="t" id="s1f" style="left:1032.50px;top:735.37px;font-size:28.5px;color:#202020;-webkit-text-stroke:0.4px #202020;letter-spacing:0.360px;"><b>times</b>.</span>
<span class="t" id="ex1" style="left:52.25px;top:882.87px;font-size:28.5px;color:#202020;font-weight:700;">Example</span>
<span class="t" id="ex1b" style="left:177.20px;top:882.87px;font-size:28.5px;color:#202020;font-weight:700;">1</span>
<span class="t" id="ex1c" style="left:195.20px;top:882.87px;font-size:28.5px;color:#202020;font-weight:700;">:</span>
<span class="t" id="in1" style="left:87.50px;top:957.17px;font-size:28.5px;color:#6b6b6b;font-weight:700;letter-spacing:0.900px;">Input:</span>
<span class="t m" id="in2" style="left:176.75px;top:958.46px;font-size:27px;color:#737373;-webkit-text-stroke:0.4px;letter-spacing:0.173px;">squares = [[0,0,1],[2,2,1]]</span>
<span class="t" id="out1" style="left:88.50px;top:1031.67px;font-size:28.5px;color:#6b6b6b;font-weight:700;letter-spacing:0.667px;">Output:</span>
<span class="t m" id="out2" style="left:201.25px;top:1032.96px;font-size:27px;color:#737373;-webkit-text-stroke:0.4px;letter-spacing:0.250px;">1.00000</span>
<span class="t" id="expl" style="left:87.50px;top:1106.87px;font-size:28.5px;color:#6b6b6b;font-weight:700;letter-spacing:0.182px;">Explanation:</span>
<span class="t" id="likes" style="left:85.00px;top:1421.87px;font-size:28.5px;color:#737373;-webkit-text-stroke:0.4px #737373;letter-spacing:1.200px;">547</span>
<span class="t" id="cmts" style="left:273.00px;top:1421.67px;font-size:28.5px;color:#737373;-webkit-text-stroke:0.4px #737373;letter-spacing:0.900px;">166</span>
<span class="t" id="online" style="left:1047.50px;top:1424.86px;font-size:24.5px;color:#737373;-webkit-text-stroke:0.4px #737373;letter-spacing:1.280px;">8053 Online</span>
<span class="t" id="tcode" style="left:1294.10px;top:113.57px;font-size:28.5px;color:#1a1a1a;-webkit-text-stroke:0.8px #1a1a1a;letter-spacing:0.400px;">Code</span>
<span class="t" id="lang" style="left:1250.20px;top:180.37px;font-size:28.5px;color:#6e6e6e;-webkit-text-stroke:0.4px #6e6e6e;letter-spacing:0.567px;">Python3</span>
<span class="t" id="auto" style="left:1459.50px;top:180.37px;font-size:28.5px;color:#6e6e6e;-webkit-text-stroke:0.4px #6e6e6e;letter-spacing:0.133px;">Auto</span>
<span class="t m" id="ln1" style="left:1286.40px;top:250.70px;font-size:26px;color:#0b216f;-webkit-text-stroke:0.4px;">1</span>
<span class="t m" id="code1" style="left:1336.20px;top:250.70px;font-size:26px;color:#000;-webkit-text-stroke:0.4px;"><span style="color:#0000ff">class</span> <span style="color:#267f99">Solution</span>:</span>
<span class="t m" id="ln2" style="left:1286.40px;top:290.70px;font-size:26px;color:#237893;-webkit-text-stroke:0.4px;">2</span>
<span class="t m" id="code2" style="left:1336.20px;top:290.70px;font-size:26px;color:#000;-webkit-text-stroke:0.4px;">    <span style="color:#0000ff">def</span> <span style="color:#795e26">separateSquares</span>(<span style="color:#001080">self</span>, <span style="color:#001080">squares</span>: List[List[<span style="color:#267f99">int</span>]]) -&gt; <span style="color:#267f99">float</span>:</span>
<span class="t m" id="ln3" style="left:1286.40px;top:330.70px;font-size:26px;color:#237893;-webkit-text-stroke:0.4px;">3</span>
<span class="t" id="lncol" style="left:1252.80px;top:684.56px;font-size:24.5px;color:#b5b5b5;-webkit-text-stroke:0.4px #b5b5b5;letter-spacing:1.060px;">Ln 1, Col 1</span>
<span class="t" id="saved" style="left:1410.10px;top:684.56px;font-size:24.5px;color:#b5b5b5;-webkit-text-stroke:0.4px #b5b5b5;letter-spacing:0.050px;">Saved</span>
<span class="t" id="need" style="left:1271.00px;top:742.27px;font-size:28.5px;color:#4a4a4a;-webkit-text-stroke:0.4px #4a4a4a;letter-spacing:0.680px;">You need to</span>
<span class="t" id="signup" style="left:1438.20px;top:742.27px;font-size:28.5px;color:#0a66ff;-webkit-text-stroke:0.75px #0a66ff;letter-spacing:1.227px;">log in / sign up</span>
<span class="t" id="torun" style="left:1646.50px;top:742.27px;font-size:28.5px;color:#4a4a4a;-webkit-text-stroke:0.4px #4a4a4a;letter-spacing:0.853px;">to run or submit</span>
<span class="t" id="tcase" style="left:1295.00px;top:829.87px;font-size:28.5px;color:#6f6f6f;-webkit-text-stroke:0.4px #6f6f6f;letter-spacing:0.143px;">Testcase</span>
<span class="t" id="tres" style="left:1486.90px;top:829.87px;font-size:28.5px;color:#1a1a1a;-webkit-text-stroke:0.8px #1a1a1a;letter-spacing:0.440px;">Test Result</span>
<span class="t" id="mustrun" style="left:1863.25px;top:1161.62px;font-size:28.5px;color:#bdbdbd;-webkit-text-stroke:0.4px #bdbdbd;letter-spacing:0.815px;">You must run your code first</span>
</div>
</div>
</body></html>
